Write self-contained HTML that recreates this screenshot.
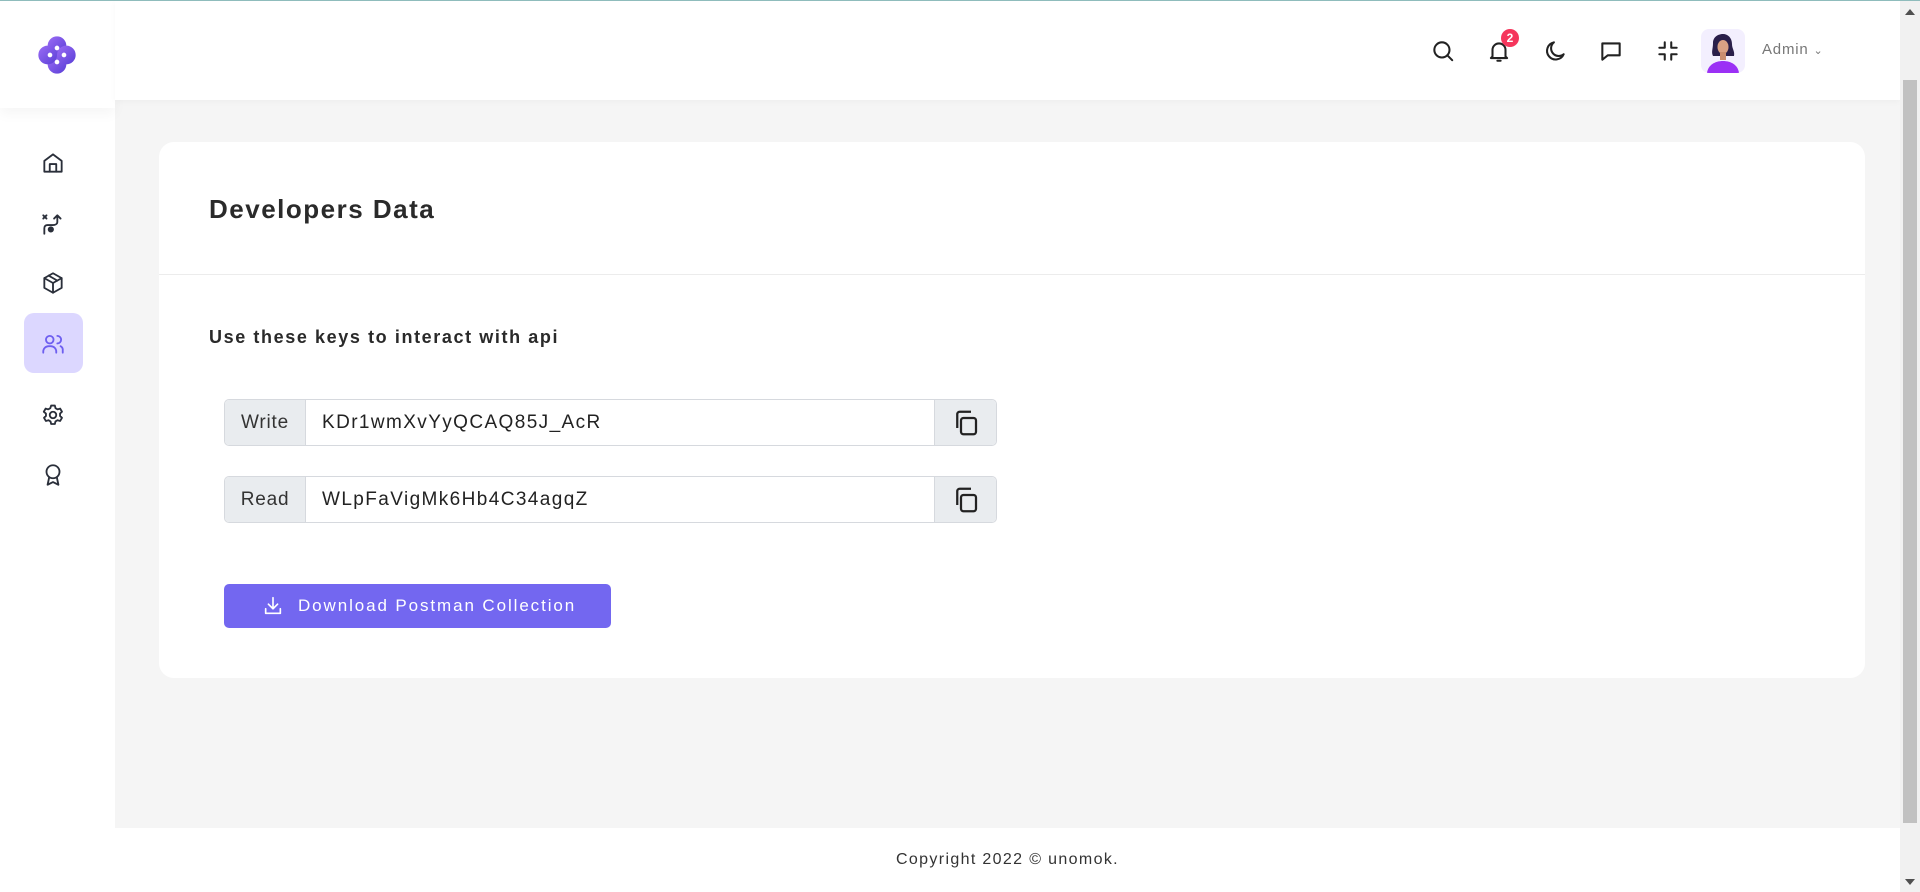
<!DOCTYPE html>
<html><head><meta charset="utf-8"><style>
*{box-sizing:border-box;margin:0;padding:0}
body{width:1920px;height:892px;overflow:hidden;background:#f5f5f5;font-family:"Liberation Sans",sans-serif;position:relative;color:#2b2b2b}
.topline{position:absolute;left:0;top:0;width:1920px;height:1px;background:#8fbcbc;z-index:5}
.side{position:absolute;left:0;top:0;width:115px;height:892px;background:#fff}
.logo{position:absolute;left:0;top:0;width:115px;height:108px;background:#fff;box-shadow:0 6px 12px rgba(0,0,0,.04)}
.ic{position:absolute;left:40px;width:26px;height:26px}
.ic svg{width:26px;height:26px;fill:none;stroke:#2a2f3a;stroke-width:1.7;stroke-linecap:round;stroke-linejoin:round}
.active{position:absolute;left:24px;top:313px;width:59px;height:60px;background:#dcd7ff;border-radius:10px}
.header{position:absolute;left:115px;top:0;width:1785px;height:100px;background:#fff;box-shadow:0 2px 6px rgba(0,0,0,.03)}
.hi{position:absolute;top:38px;width:26px;height:26px}
.hi svg{width:26px;height:26px;fill:none;stroke:#222;stroke-width:1.9;stroke-linecap:round;stroke-linejoin:round}
.card{position:absolute;left:159px;top:142px;width:1706px;height:536px;background:#fff;border-radius:15px}
.title{position:absolute;left:50px;top:52px;font-size:26px;font-weight:bold;color:#2a2a2a;letter-spacing:1.5px}
.div{position:absolute;left:0;top:132px;width:100%;height:1px;background:#ececec}
.sub{position:absolute;left:50px;top:185px;font-size:18px;font-weight:bold;color:#2a2a2a;letter-spacing:1.6px}
.row{position:absolute;left:65px;width:773px;height:47px;border:1px solid #d6d9de;border-radius:5px;overflow:hidden;display:flex;font-size:19px}
.lab{width:81px;background:#e9ecef;border-right:1px solid #d6d9de;display:flex;align-items:center;justify-content:center;color:#333;letter-spacing:.8px}
.val{flex:1;display:flex;align-items:center;padding-left:16px;color:#222;letter-spacing:1.4px}
.cp{width:62px;background:#e9ecef;border-left:1px solid #d6d9de;display:flex;align-items:center;justify-content:center}
.btn{position:absolute;left:65px;top:442px;width:387px;height:44px;background:#7367f0;border-radius:5px;color:#fff;font-size:17px;display:flex;align-items:center;padding-left:38px;letter-spacing:1.9px}
.footer{position:absolute;left:115px;top:828px;width:1785px;height:64px;background:#fff;text-align:center;font-size:16px;color:#333;padding-top:23px;letter-spacing:1.35px}
.sb{position:absolute;left:1900px;top:0;width:20px;height:892px;background:#f1f1f1}
.thumb{position:absolute;left:1903px;top:80px;width:14px;height:743px;background:#c1c1c1}
</style></head><body>
<div class="topline"></div>
<div class="side">
 <div class="logo">
  <svg style="position:absolute;left:36px;top:34px" width="42" height="42" viewBox="0 0 36 36">
   <defs><linearGradient id="g" x1="0" y1="0" x2="1" y2="1"><stop offset="0" stop-color="#9b6cf5"/><stop offset="1" stop-color="#5a3fd6"/></linearGradient></defs>
   <circle cx="18" cy="10" r="8" fill="url(#g)"/><circle cx="18" cy="26" r="8" fill="url(#g)"/><circle cx="10" cy="18" r="8" fill="url(#g)"/><circle cx="26" cy="18" r="8" fill="url(#g)"/>
   <circle cx="18" cy="12" r="2" fill="#fff"/><circle cx="12" cy="18" r="2" fill="#fff"/><circle cx="24" cy="18" r="2" fill="#fff"/><circle cx="18" cy="24" r="2" fill="#fff"/>
  </svg>
 </div>
 <div class="ic" style="top:150px"><svg viewBox="0 0 24 24"><path d="M4 10l8-6 8 6v10H4z"/><path d="M9 20v-7h6v7"/></svg></div>
 <div class="ic" style="top:211px"><svg viewBox="0 0 24 24"><path d="M3 4l3 3M6 4l-3 3"/><path d="M16 4l3 3M16 4l-3 3M16 4v6c0 2-2 3-4 3H7c-2 0-3 1-3 3v5"/><circle cx="10" cy="17" r="2" fill="#2a2f3a"/></svg></div>
 <div class="ic" style="top:270px"><svg viewBox="0 0 24 24"><path d="M12 3l8 4.5v9L12 21l-8-4.5v-9z"/><path d="M4 7.5l8 4.5 8-4.5M12 12v9M8 5.2l8 4.6"/></svg></div>
 <div class="active"></div>
 <div class="ic" style="top:331px"><svg viewBox="0 0 24 24" style="stroke:#6e5ff0"><circle cx="9" cy="8" r="3.5"/><path d="M3 20v-1a5 5 0 0 1 5-5h2a5 5 0 0 1 5 5v1"/><path d="M16 4.5a3.5 3.5 0 0 1 0 7M19 14a4 4 0 0 1 2 4v2"/></svg></div>
 <div class="ic" style="top:402px"><svg viewBox="0 0 24 24"><circle cx="12" cy="12" r="3"/><path d="M10.3 3.3h3.4l.6 2.4 1.9 1.1 2.4-.7 1.7 2.9-1.8 1.7v2.2l1.8 1.7-1.7 2.9-2.4-.7-1.9 1.1-.6 2.4h-3.4l-.6-2.4-1.9-1.1-2.4.7-1.7-2.9 1.8-1.7v-2.2L3.5 9l1.7-2.9 2.4.7 1.9-1.1z"/></svg></div>
 <div class="ic" style="top:462px"><svg viewBox="0 0 24 24"><circle cx="12" cy="9" r="6"/><path d="M8.5 14l-1.5 7 5-2.5 5 2.5-1.5-7"/></svg></div>
</div>
<div class="header">
 <div class="hi" style="left:1315px"><svg viewBox="0 0 24 24"><circle cx="11" cy="11" r="7"/><path d="M16 16l4.5 4.5"/></svg></div>
 <div class="hi" style="left:1371px"><svg viewBox="0 0 24 24"><path d="M6 17V11a6 6 0 0 1 12 0v6l1.5 1.5h-15z"/><path d="M10.5 21h3"/></svg></div>
 <div style="position:absolute;left:1386px;top:29px;width:18px;height:18px;border-radius:50%;background:#f5365c;color:#fff;font-size:12px;font-weight:bold;text-align:center;line-height:18px">2</div>
 <div class="hi" style="left:1427px"><svg viewBox="0 0 24 24"><path d="M20 15A8 8 0 1 1 11 4a6.5 6.5 0 0 0 9 11z"/></svg></div>
 <div class="hi" style="left:1483px"><svg viewBox="0 0 24 24"><path d="M4 5h16v11H9l-5 4z"/></svg></div>
 <div class="hi" style="left:1540px"><svg viewBox="0 0 24 24"><path d="M4 9h5V4M20 9h-5V4M4 15h5v5M20 15h-5v5"/></svg></div>
 <div style="position:absolute;left:1586px;top:29px;width:44px;height:44px;border-radius:8px;background:#f3effe;overflow:hidden">
  <svg width="44" height="44" viewBox="0 0 44 44"><path d="M12 14c0-6 5-9 10-9s9 4 9 10c0 5 3 7 2 12H12c-2-4 0-7 0-13z" fill="#2a1f4a"/><ellipse cx="22" cy="18" rx="5.5" ry="7" fill="#d9a184"/><rect x="19" y="23" width="6" height="8" fill="#c98d70"/><path d="M6 44c1-8 8-12 16-12s15 4 16 12z" fill="#9b30f5"/></svg>
 </div>
 <div style="position:absolute;left:1647px;top:41px;font-size:15px;color:#777;letter-spacing:.8px">Admin <span style="font-size:11px">&#8964;</span></div>
</div>
<div class="card">
 <div class="title">Developers Data</div>
 <div class="div"></div>
 <div class="sub">Use these keys to interact with api</div>
 <div class="row" style="top:257px"><div class="lab">Write</div><div class="val">KDr1wmXvYyQCAQ85J_AcR</div><div class="cp"><svg width="30" height="30" viewBox="0 0 24 24" fill="none" stroke="#222" stroke-width="1.8" stroke-linejoin="round"><rect x="8" y="8" width="12" height="13" rx="2"/><path d="M5 16V5a2 2 0 0 1 2-2h9"/></svg></div></div>
 <div class="row" style="top:334px"><div class="lab">Read</div><div class="val">WLpFaVigMk6Hb4C34agqZ</div><div class="cp"><svg width="30" height="30" viewBox="0 0 24 24" fill="none" stroke="#222" stroke-width="1.8" stroke-linejoin="round"><rect x="8" y="8" width="12" height="13" rx="2"/><path d="M5 16V5a2 2 0 0 1 2-2h9"/></svg></div></div>
 <div class="btn"><svg width="22" height="22" viewBox="0 0 24 24" fill="none" stroke="#fff" stroke-width="1.8" stroke-linecap="round" stroke-linejoin="round" style="margin-right:14px"><path d="M12 3v12M7 10l5 5 5-5M4 15v5h16v-5"/></svg>Download Postman Collection</div>
</div>
<div class="footer">Copyright 2022 © unomok.</div>
<div class="sb"></div><div class="thumb"></div>
<svg style="position:absolute;left:1904px;top:8px" width="12" height="8"><path d="M1 7L6 1l5 6z" fill="#505050"/></svg>
<svg style="position:absolute;left:1904px;top:878px" width="12" height="8"><path d="M1 1l5 6 5-6z" fill="#505050"/></svg>
</body></html>
